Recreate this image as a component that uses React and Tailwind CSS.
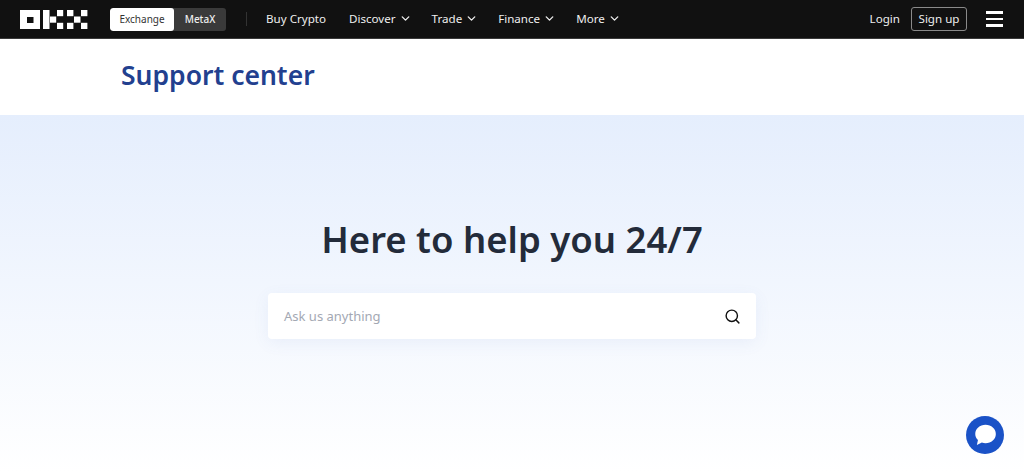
import React from 'react';
import { ChevronDown, Search } from 'lucide-react';

const navItems = ['Discover', 'Trade', 'Finance', 'More'];

const OkxLogo = () => (
  <svg width="68" height="19" viewBox="0 0 68 19" fill="#fff">
    {/* O */}
    <path fillRule="evenodd" d="M0 0h20v19H0z M7 7v6h6.500V7z" />
    {/* K */}
    <rect x="23" y="0" width="6.500" height="19" />
    <rect x="30" y="6.500" width="6.200" height="6.200" />
    <rect x="37" y="0" width="6.200" height="6.200" />
    <rect x="37" y="12.800" width="6.200" height="6.200" />
    {/* X */}
    <rect x="47" y="0" width="6.400" height="6.200" />
    <rect x="47" y="12.800" width="6.400" height="6.200" />
    <rect x="54" y="6.500" width="6.500" height="6.200" />
    <rect x="61" y="0" width="6.400" height="6.200" />
    <rect x="61" y="12.800" width="6.400" height="6.200" />
  </svg>
);

const App = () => {
  return (
    <div className="h-[473px] overflow-hidden bg-white font-['Noto_Sans',sans-serif]">
      {/* Top bar */}
      <header className="flex h-[39px] items-center justify-between border-b border-[#3a3a3a] bg-[#111111] pl-5 pr-[21px] text-[11.600px] text-[#eeeeee]">
        <div className="flex items-center">
          <OkxLogo />
          <div className="ml-[22px] flex h-[23px] w-[116px] overflow-hidden rounded-[3px] bg-[#3a3a3a] text-[10px]">
            <div className="flex w-[64px] items-center justify-center rounded-[3px] bg-white text-[#333333]">Exchange</div>
            <div className="flex flex-1 items-center justify-center font-medium text-[#eeeeee]">MetaX</div>
          </div>
          <div className="ml-5 h-[14px] w-px bg-[#333333]" />
          <nav className="ml-[19px] flex items-center gap-[20px]">
            <span className="mr-[3px]">Buy Crypto</span>
            {navItems.map((item) => (
              <span key={item} className="flex items-center gap-[3px]">
                {item}
                <ChevronDown size={13} strokeWidth={2.5} />
              </span>
            ))}
          </nav>
        </div>
        <div className="flex items-center">
          <span>Login</span>
          <span className="ml-[11px] flex h-[24px] w-[56px] items-center justify-center rounded-[3px] border border-[#8a8a8a]">Sign up</span>
          <div className="ml-[19px] flex w-[17px] flex-col gap-[4px]">
            <div className="h-[2.500px] bg-white" />
            <div className="h-[2.500px] bg-white" />
            <div className="h-[2.500px] bg-white" />
          </div>
        </div>
      </header>

      {/* Title */}
      <div className="flex h-[76px] items-center pb-[2px] pl-[121px]">
        <h1 className="text-[26.500px] font-semibold text-[#22408f]">Support center</h1>
      </div>

      {/* Hero */}
      <main className="relative flex h-[358px] flex-col items-center bg-gradient-to-b from-[#e5eefd] to-white pt-[96px]">
        <h2 className="text-[36.500px] leading-[56px] font-semibold text-[#232b3a]">Here to help you 24/7</h2>
        <div className="mt-[26px] flex h-[46px] w-[488px] items-center justify-between rounded-[4px] bg-white pl-[16px] pr-[15px] shadow-[0_4px_16px_rgba(90,120,190,0.08)]">
          <span className="pt-px text-[13px] text-[#a3a8b3]">Ask us anything</span>
          <Search size={17} strokeWidth={2} className="text-[#111111]" />
        </div>
        {/* Chat bubble */}
        <div className="absolute left-[966px] top-[301px] flex h-[38px] w-[38px] items-center justify-center rounded-full bg-[#1a52c7]">
          <svg width="26" height="26" viewBox="0 0 24 24" fill="none">
            <path d="M12.500 2.500c5.300 0 9.500 3.700 9.500 8.500s-4.200 8.500-9.500 8.500c-1.200 0-2.300-.2-3.400-.5l-4.600 2.200 1-4.600C3.900 15.100 3 13.200 3 11c0-4.800 4.200-8.500 9.500-8.500z" fill="#fff" />
          </svg>
        </div>
      </main>
    </div>
  );
};

export default App;
